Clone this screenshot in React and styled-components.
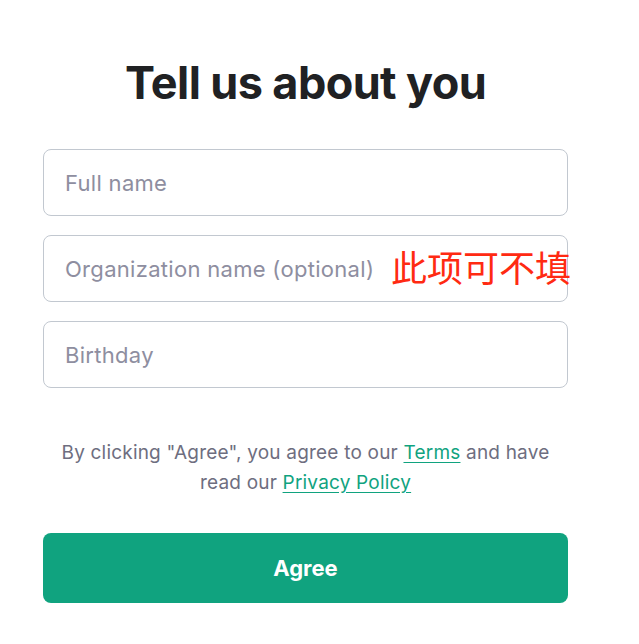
import React from "react";
import styled, { createGlobalStyle } from "styled-components";

const GlobalStyle = createGlobalStyle`
  body {
    margin: 0;
    background: #ffffff;
    font-family: Inter, "Noto Sans", "Liberation Sans", sans-serif;
  }
`;

const Page = styled.div`
  width: 525px;
  padding: 56px 0 40px 43px;
  display: flex;
  flex-direction: column;
`;

const Title = styled.h1`
  margin: 0 0 39px;
  text-align: center;
  font-size: 45px;
  font-weight: 700;
  letter-spacing: -0.6px;
  line-height: 54px;
  color: #202123;
`;

const Fields = styled.div`
  display: flex;
  flex-direction: column;
  gap: 19px;
`;

const FieldWrap = styled.div`
  position: relative;
`;

const Input = styled.input`
  box-sizing: border-box;
  width: 100%;
  height: 67px;
  padding: 0 21px;
  border: 1px solid #c2c8d0;
  border-radius: 8px;
  font-family: inherit;
  font-size: 22px;
  letter-spacing: 0.3px;
  color: #2d333a;
  outline: none;

  &::placeholder {
    color: #8e8ea0;
  }
`;

const Note = styled.span`
  position: absolute;
  left: 348px;
  top: 5px;
  white-space: nowrap;
  font-family: "Noto Sans CJK SC", sans-serif;
  font-size: 36px;
  color: #ff2a12;
  pointer-events: none;
`;

const Legal = styled.p`
  margin: 50px 0 35px;
  padding: 0 16px;
  text-align: center;
  font-size: 19px;
  letter-spacing: 0.2px;
  line-height: 30px;
  color: #6e6e80;
`;

const Link = styled.a`
  color: #10a37f;
  text-decoration: underline;
  text-underline-offset: 3px;
`;

const AgreeButton = styled.button`
  height: 70px;
  border: none;
  border-radius: 8px;
  background: #10a37f;
  color: #ffffff;
  font-family: inherit;
  font-size: 22px;
  font-weight: 700;
  cursor: pointer;
`;

const App = () => {
  return (
    <>
      <GlobalStyle />
      <Page>
        <Title>Tell us about you</Title>
        <Fields>
          <FieldWrap>
            <Input placeholder="Full name" />
          </FieldWrap>
          <FieldWrap>
            <Input placeholder="Organization name (optional)" />
            <Note>此项可不填</Note>
          </FieldWrap>
          <FieldWrap>
            <Input placeholder="Birthday" />
          </FieldWrap>
        </Fields>
        <Legal>
          By clicking "Agree", you agree to our <Link href="#">Terms</Link> and
          have read our <Link href="#">Privacy Policy</Link>
        </Legal>
        <AgreeButton>Agree</AgreeButton>
      </Page>
    </>
  );
};

export default App;
